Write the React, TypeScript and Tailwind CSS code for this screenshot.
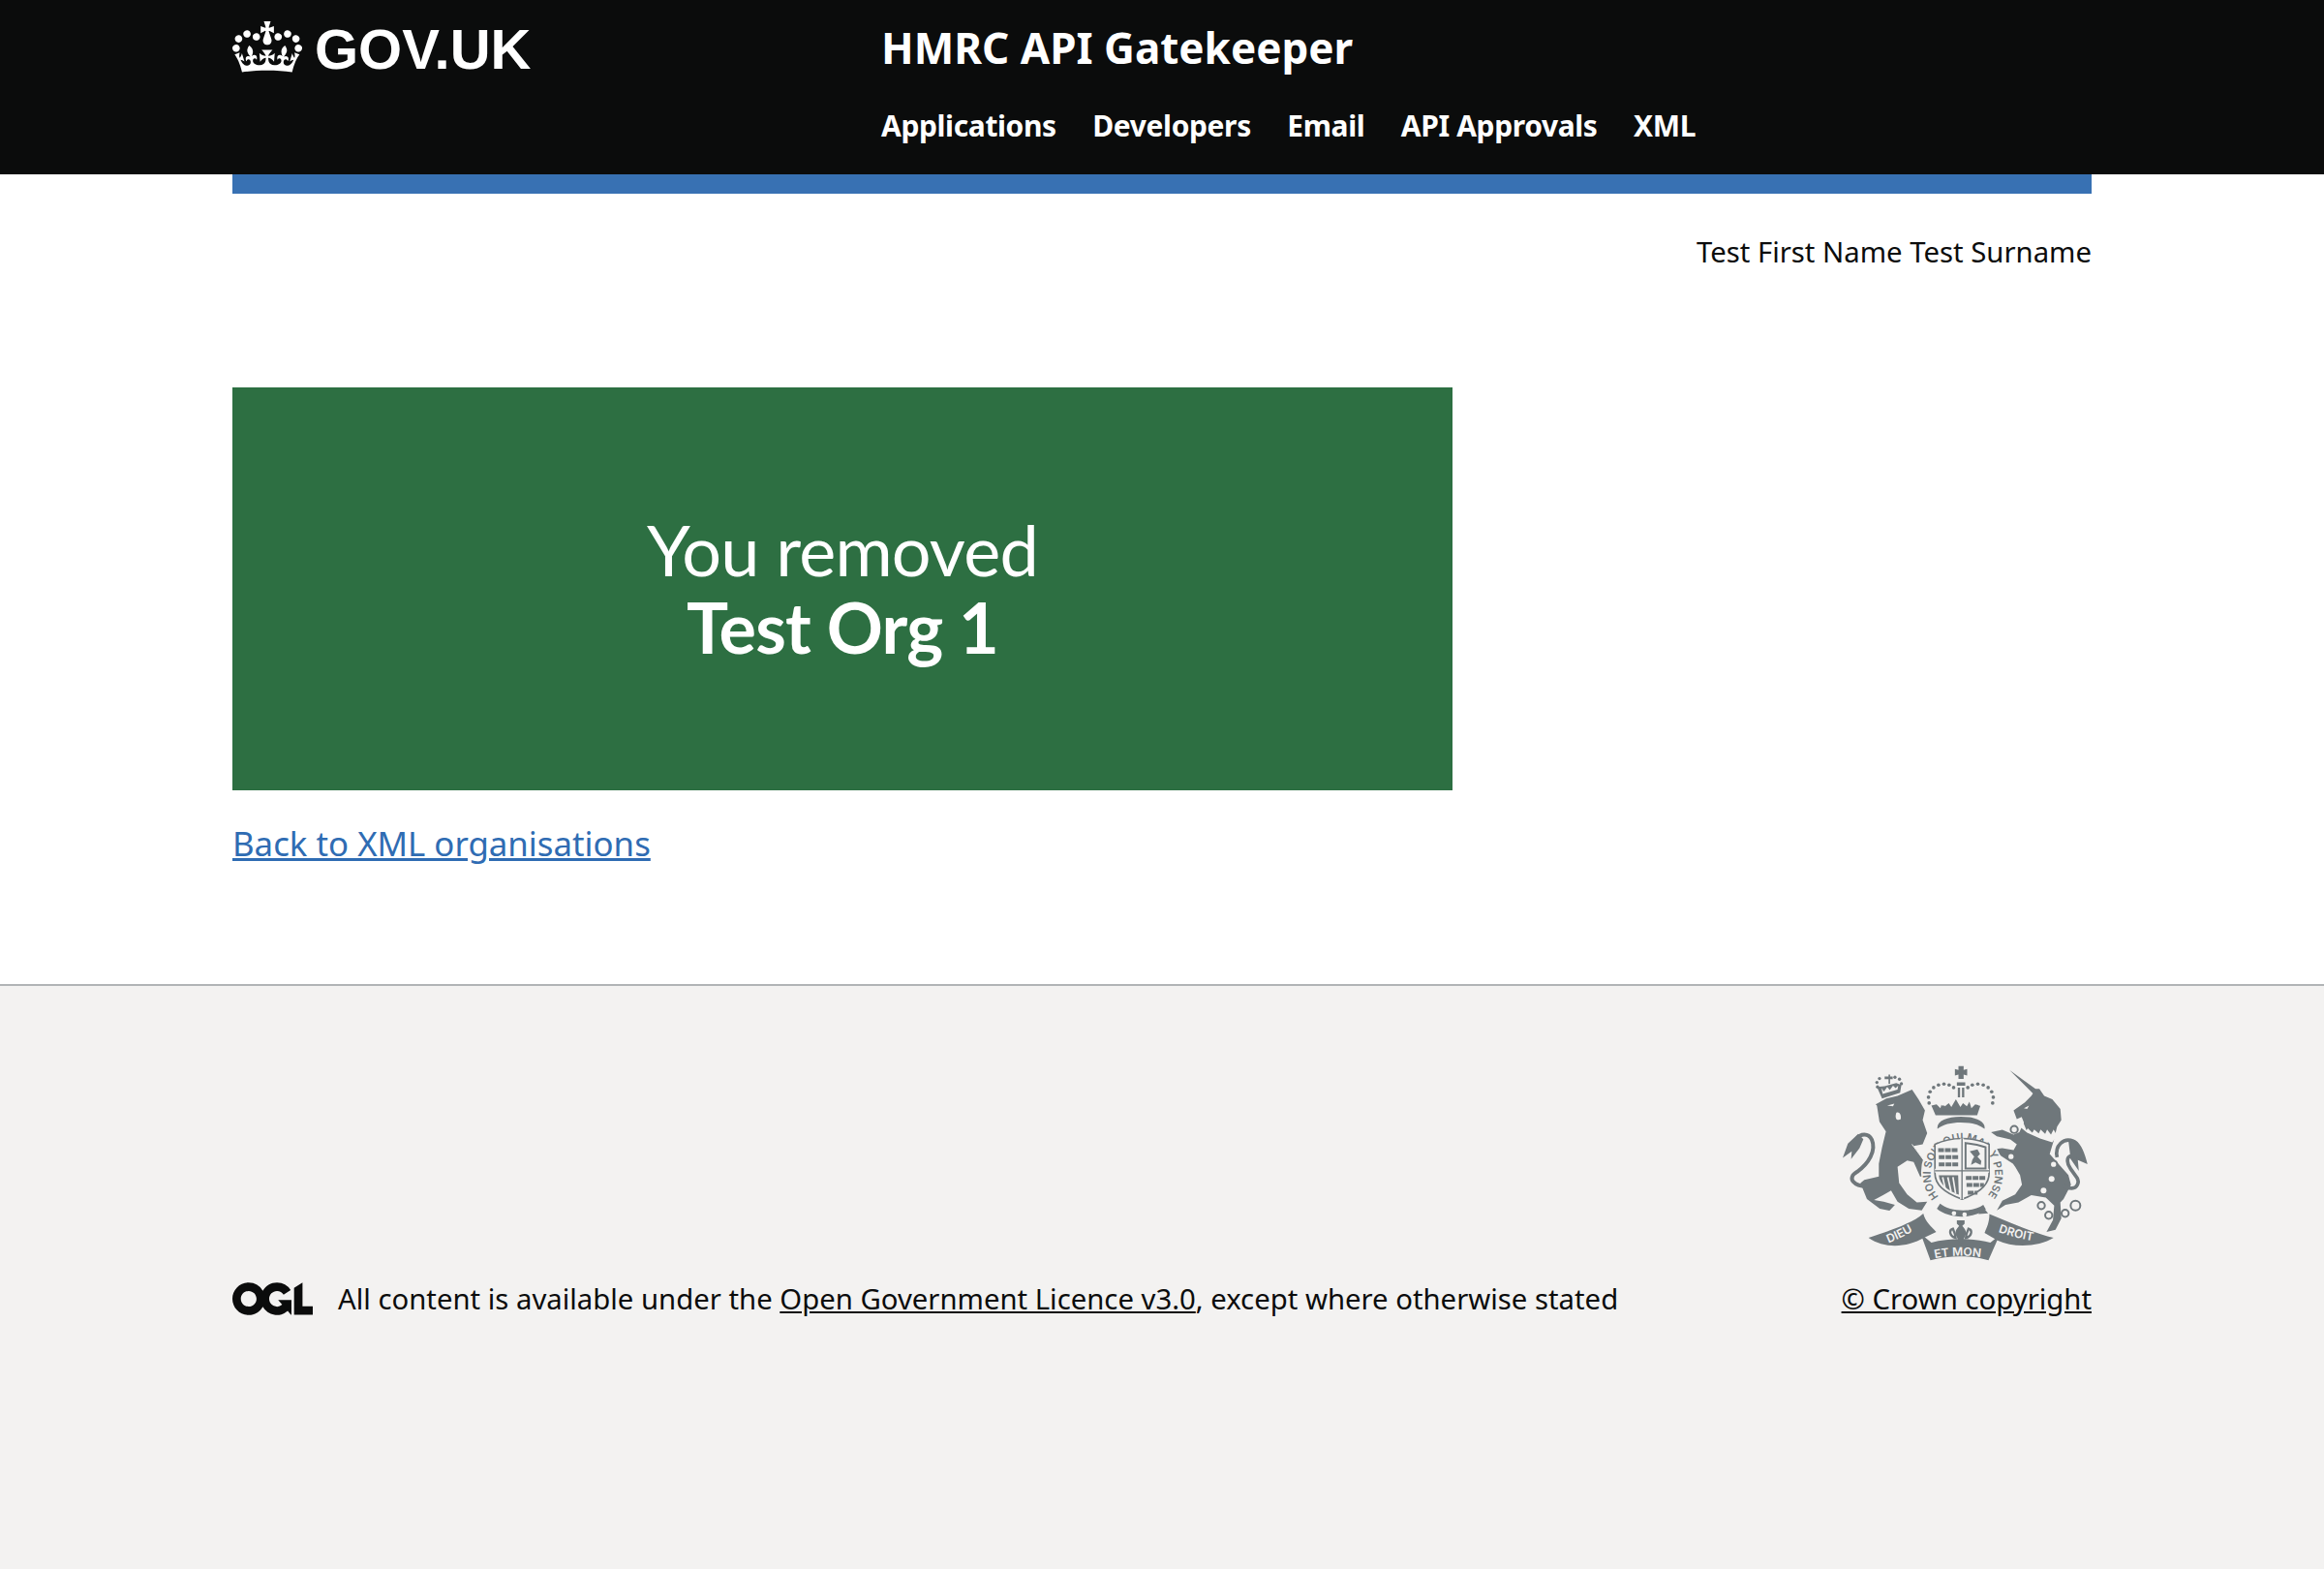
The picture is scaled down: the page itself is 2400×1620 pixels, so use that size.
const font = "font-['Noto_Sans',sans-serif]";

function Crown() {
  return (
    <svg viewBox="0 0 132 97" className="w-[72px] h-[53px] text-white" fill="currentColor">
      <path fillRule="evenodd" d="M25 30.2c3.5 1.5 7.7-.2 9.1-3.7 1.5-3.6-.2-7.8-3.9-9.2-3.6-1.4-7.6.3-9.1 3.9-1.4 3.5.3 7.5 3.9 9zM9 39.5c3.6 1.5 7.8-.2 9.2-3.7 1.5-3.6-.2-7.8-3.9-9.1-3.6-1.5-7.6.2-9.1 3.8-1.4 3.5.3 7.5 3.8 9zM4.4 57.2c3.5 1.5 7.7-.2 9.1-3.8 1.5-3.6-.2-7.7-3.9-9.1-3.5-1.5-7.6.3-9.1 3.8-1.4 3.5.3 7.6 3.9 9.1zm38.3-21.4c3.5 1.5 7.7-.2 9.1-3.8 1.5-3.6-.2-7.7-3.9-9.1-3.6-1.5-7.6.3-9.1 3.8-1.3 3.6.4 7.7 3.9 9.1zm64.4-5.6c-3.6 1.5-7.8-.2-9.1-3.7-1.5-3.6.2-7.8 3.8-9.2 3.6-1.4 7.7.3 9.2 3.9 1.3 3.5-.4 7.5-3.9 9zm15.9 9.3c-3.6 1.5-7.7-.2-9.1-3.7-1.5-3.6.2-7.8 3.7-9.1 3.6-1.5 7.7.2 9.2 3.8 1.5 3.5-.3 7.5-3.8 9zm4.7 17.7c-3.6 1.5-7.8-.2-9.2-3.8-1.5-3.6.2-7.7 3.9-9.1 3.6-1.5 7.7.3 9.2 3.8 1.3 3.5-.4 7.6-3.9 9.1zM89.3 35.8c-3.6 1.5-7.8-.2-9.2-3.8-1.4-3.6.2-7.7 3.9-9.1 3.6-1.5 7.7.3 9.2 3.8 1.4 3.6-.3 7.7-3.9 9.1zM69.7 17.7l8.9 4.7V9.3l-8.9 2.8c-.2-.3-.5-.6-.9-.9L72.4 0H59.6l3.6 11.2c-.3.3-.6.5-.9.9l-8.8-2.8v13.1l8.8-4.7c.3.3.6.7.9.9l-5 15.4v.1c-.2.8-.4 1.6-.4 2.4 0 4.1 3.1 7.5 7 8.1h.2c.3 0 .7.1 1 .1.4 0 .7 0 1-.1h.2c4-.6 7.1-4.1 7.1-8.1 0-.8-.1-1.7-.4-2.4V34l-5.1-15.4c.4-.2.7-.6 1-.9zM66 92.8c16.9 0 32.8 1.1 47.1 3.2 4-16.9 8.9-26.7 14-33.5l-9.6-3.4c1 4.9 1.1 7.2 0 10.2-1.5-1.4-3-4.3-4.2-8.7L108.6 76c2.8-2 5-3.2 7.5-3.3-4.4 9.4-10 11.9-13.6 11.2-4.3-.8-6.3-4.6-5.6-7.9 1-4.7 5.7-5.9 8-.5 4.3-8.7-3-11.4-7.6-8.8 7.1-7.2 7.9-13.5 2.1-21.1-8 6.1-8.1 12.3-4.5 20.8-4.7-5.4-12.1-2.5-9.5 6.2 3.4-5.2 7.9-2 7.2 3.1-.6 4.3-6.4 7.8-13.5 7.2-10.3-.9-10.9-8-11.2-13.8 2.5-.5 7.1 1.8 11 7.3L80.2 60c-4.1 4.4-8 5.3-12.3 5.4 1.4-4.4 8-11.6 8-11.6H55.5s6.4 7.2 7.9 11.6c-4.2-.1-8-1-12.3-5.4l1.4 16.4c3.9-5.5 8.5-7.7 10.9-7.3-.3 5.8-.9 12.8-11.1 13.8-7.2.6-12.9-2.9-13.5-7.2-.7-5 3.8-8.3 7.1-3.1 2.7-8.7-4.6-11.6-9.4-6.2 3.7-8.5 3.6-14.7-4.6-20.8-5.8 7.6-5 13.9 2.2 21.1-4.7-2.6-11.9.1-7.7 8.8 2.3-5.5 7.1-4.2 8.1.5.7 3.3-1.3 7.1-5.7 7.9-3.5.7-9-1.8-13.5-11.2 2.5.1 4.7 1.3 7.5 3.3l-4.7-15.4c-1.2 4.4-2.7 7.2-4.3 8.7-1.1-3-.9-5.3 0-10.2l-9.5 3.4c5 6.9 9.9 16.7 14 33.5 14.8-2.1 30.8-3.2 47.7-3.2z" />
    </svg>
  );
}

function Ogl() {
  return (
    <svg viewBox="0 0 483.2 195.7" className="w-[83px] h-[34px] shrink-0 text-[#0b0c0c]" fill="currentColor">
      <path d="M421.5 142.8V.1l-50.7 32.3v161.1h112.4v-50.7zm-122.3-9.6A47.12 47.12 0 0 1 221 97.8c0-26 21.1-47.1 47.1-47.1 16.7 0 31.4 8.7 39.7 21.8l42.7-27.2A97.63 97.63 0 0 0 268.1 0c-36.5 0-68.3 20.1-85.1 49.7A98 98 0 0 0 97.8 0C43.9 0 0 43.9 0 97.8s43.9 97.8 97.8 97.8c36.5 0 68.3-20.1 85.1-49.7a97.76 97.76 0 0 0 149.6 25.4l19.4 22.2h3v-87.8h-80l24.3 27.5zM97.8 145c-26 0-47.1-21.1-47.1-47.1s21.1-47.1 47.1-47.1 47.2 21 47.2 47S123.8 145 97.8 145" />
    </svg>
  );
}

const BG = "#f3f2f1";
const INK = "#6f777b";

function Crest() {
  const crownDots = [[338,172],[336,154],[341,137],[352,124],[367,116],[384,113],[400,116],[414,124],[458,124],[472,116],[489,113],[506,116],[521,124],[532,137],[537,154],[535,172]];
  const lionDots = [[178,122],[176,108],[184,96],[232,92],[246,98],[252,112]];
  return (
    <svg viewBox="70 50 760 620" className="w-[253px] h-[207px]" fill={INK}>
      {/* royal crown */}
      <path d="M429 57h16v12l11-3v21l-11-3v13h-16V84l-11 3V66l11 3z" />
      <path d="M424 108h26v10h-26zM427 124h7v30h-7zM440 124h7v30h-7z" />
      {crownDots.map(([x, y], i) => <circle key={i} cx={x} cy={y} r="5.5" />)}
      <path d="M345 180l16-4 12 12 6-20 8 14 12-10 8 12 14-24 14 24 8-12 12 10 8-14 6 20 12-12 16 4-10 30H358z" />
      <path d="M372 172l12-14 10 14-6 8h-10zM486 172l12-14 10 14-6 8h-10z" fill={BG} />
      <path d="M364 252c-4-24 28-38 72-38s78 14 74 38c-18-14-44-20-74-20s-56 6-72 20z" />

      {/* lion crown */}
      {lionDots.map(([x, y], i) => <circle key={i} cx={x} cy={y} r="5" />)}
      <path d="M200 90h12v-6h5v6h8v8h-8v14h-5V98h-12z" />
      <path d="M176 122l24-2 36-10 16 6-4 24-56 18z" />
      <path d="M190 126l8 10 10-14 8 10 10-14 8 8 8-8-2 12-46 14z" fill={BG} />

      {/* lion */}
      <path d="M172 176l33-18 35-8 45-20 20 30 20 35-7 30 14 40-14 35-28 5 45 65 5 30-30 0-20-45-20-5-30 20 5 50 25 35 30 25 32-2-17 27-40-5-35-22-20-35-25 15-28 15 30 5 35 10-17 18-30-6-40-30-20-50 12-10 45-10 0-40 10-50 12-50-20-30-8-50z" />
      <path d="M208 180l22-6-4 8zM236 202c10-4 16 6 14 20-10 6-20 0-14-20z" fill={BG} />
      <path d="M285 300l50 68 4 30" stroke={BG} strokeWidth="3" fill="none" />
      <path d="M150 430C105 432 80 405 115 385c35-25 60-65 45-100-10-20-35-20-48 0" stroke={INK} strokeWidth="12" fill="none" />
      <path d="M118 268l-32 30-16 44 28-20-2 24 26-34 12-28z" />

      {/* unicorn */}
      <path d="M588 70L668 128L680 128L695 150L720 160L745 190L748 225L735 245L724 290L712 330L730 350L770 395L778 425L755 470L745 480L748 530L730 565L702 572L722 535L726 490L700 465L655 458L615 480L575 488L548 505L565 475L605 455L626 425L620 395L605 370L598 360L560 335L538 315L565 312L600 318L610 300L590 285L548 275L530 262L565 255L600 270L618 262L632 232L625 215L610 222L600 195L635 170L655 150L660 142z" />
      <path d="M628 228l-8 18 22 18 40 18 38 12 24-34-6-2-6 10-8-14-8 16-12-16-6 14-14-14-6 12-14-12-6 10-14-14-4 6z" fill={BG} />
      <path d="M632 188l16-8-6 10z" fill={BG} />
      <path d="M735 340c-8-36 20-62 50-50 20 8 30 40 36 62l-28-12 2 22-18-26c-14 4-12 24 0 40l20 28c8 14 0 32-16 32-10 0-22-4-28-12" stroke={INK} strokeWidth="11" fill="none" />
      <path d="M770 288l28 6 24 58-28-12 2 22-20-26z" />
      <circle cx="718" cy="407" r="9" fill={BG} />
      <circle cx="693" cy="443" r="9" fill={BG} />
      {[[602,254,11],[592,338,11],[724,362,11],[686,490,11],[709,520,11],[760,514,11],[792,490,15]].map(([x, y, r], i) => (
        <circle key={i} cx={x} cy={y} r={r} fill={BG} stroke={INK} strokeWidth="6" />
      ))}

      {/* garter */}
      <ellipse cx="441" cy="388" rx="128" ry="138" fill={BG} />
      <path d="M372 484c30 26 104 28 134 4l8 14c-40 30-114 30-152-2z" />
      <circle cx="415" cy="514" r="7" fill={BG} /><circle cx="448" cy="518" r="7" fill={BG} />
      <path d="M503 492l18 22-30 2z" />
      <defs>
        <path id="garterArc" d="M368 462A100 104 0 1 1 520 458" />
      </defs>
      <text fontFamily="Inter, sans-serif" fontSize="33" fontWeight="600" fill={INK}><textPath href="#garterArc">HONI SOIT QUI MAL Y PENSE</textPath></text>

      {/* shield */}
      <path d="M356 300c26-12 54-18 84-18s58 6 84 18v90c0 40-44 66-84 80-40-14-84-40-84-80z" fill={BG} stroke={INK} strokeWidth="5" />
      <path d="M440 282v188M356 382h168" stroke={BG} strokeWidth="12" />
      <path d="M440 282v188M356 382h168" stroke={INK} strokeWidth="4" />
      <path d="M366 318h62M368 340h60M368 362h60" stroke={INK} strokeWidth="12" strokeDasharray="18 3" />
      <path d="M451 296c22 2 42 6 62 13v66h-62z" fill="none" stroke={INK} strokeWidth="6" />
      <path d="M464 322l24-6 8 14-8 8 12 14-2 12-16-8-14 8 4-16 6-10z" />
      <path d="M368 396h60l2 60c-30-10-60-30-62-60z" />
      <path d="M380 402l8 36M396 402l10 44M412 402l8 50" stroke={BG} strokeWidth="5" />
      <path d="M452 404h62M454 426h54M458 450h30" stroke={INK} strokeWidth="12" strokeDasharray="18 3" />

      {/* ribbon */}
      <path d="M150 590C200 572 280 550 320 515C326 540 345 555 360 572L322 590C270 620 200 625 150 590z" />
      <path d="M312 578L345 605C400 590 475 590 528 605L556 582L522 660C470 644 400 644 342 660z" />
      <path d="M724 590C660 575 585 540 525 516C525 545 515 560 510 575L550 598C600 622 680 618 724 590z" />
      <defs>
        <path id="ribL" d="M212 606Q266 585 316 552" />
        <path id="ribM" d="M352 655Q436 636 526 655" />
        <path id="ribR" d="M552 572Q610 592 676 602" />
      </defs>
      <text fontFamily="Inter, sans-serif" fontSize="36" fontWeight="600" fill={BG}><textPath href="#ribL">DIEU</textPath></text>
      <text fontFamily="Inter, sans-serif" fontSize="36" fontWeight="600" fill={BG}><textPath href="#ribM" startOffset="4">ET MON</textPath></text>
      <text fontFamily="Inter, sans-serif" fontSize="36" fontWeight="600" fill={BG}><textPath href="#ribR">DROIT</textPath></text>

      {/* fleur-de-lis */}
      <path d="M424 536h24v10l-8 8h-8l-8-8z" />
      <path d="M436 548c14 14 20 24 14 36l-14 30-14-30c-6-12 0-22 14-36z" />
      <path d="M412 562c-14 4-10 24 8 28l-2-12zM460 562c14 4 10 24-8 28l2-12z" fill="none" stroke={INK} strokeWidth="7" />
    </svg>
  );
}

export default function App() {
  return (
    <div className={`${font} min-h-[1620px] flex flex-col bg-white text-[#0b0c0c] text-[29.3px]`}>
      <header className="bg-[#0b0c0c] h-[180px] text-white">
        <div className="w-[1920px] mx-auto flex">
          <div className="w-[670px] pt-[22px] flex items-start gap-[13px]">
            <Crown />
            <span className="font-['Liberation_Sans',sans-serif] font-bold text-[58px] leading-[58px]">GOV.UK</span>
          </div>
          <div>
            <div className="pt-[24px] font-bold text-[44px] leading-[50px]">HMRC API Gatekeeper</div>
            <nav className="mt-[37px] flex gap-[37.5px] font-bold text-[30px] leading-[38px] tracking-[-0.38px]">
              <span>Applications</span>
              <span>Developers</span>
              <span>Email</span>
              <span>API Approvals</span>
              <span>XML</span>
            </nav>
          </div>
        </div>
      </header>
      <main className="w-[1920px] mx-auto flex-none">
        <div className="h-[20px] bg-[#3871b3]" />
        <div className="pt-[39px] text-right leading-[42px]">Test First Name Test Surname</div>
        <section className="mt-[119px] w-[1260px] h-[416px] pb-[3px] bg-[#2d6f42] text-white text-center flex flex-col justify-center font-['Lato',sans-serif] text-[72px] leading-[80px] tracking-[-0.8px]">
          <div>You removed</div>
          <div className="font-bold">Test Org 1</div>
        </section>
        <div className="mt-[30px] mb-[120px]">
          <a className="text-[#2f6cb3] underline leading-[50px] text-[34.8px]">Back to XML organisations</a>
        </div>
      </main>
      <footer className="grow bg-[#f3f2f1] border-t-2 border-[#b1b4b6]">
        <div className="w-[1920px] mx-auto flex items-end justify-between pt-[80px]">
          <div className="flex items-center gap-[26px] leading-[40px]">
            <Ogl />
            <span>All content is available under the <a className="underline">Open Government Licence v3.0</a>, except where otherwise stated</span>
          </div>
          <div className="flex flex-col items-end">
            <div className="mr-[4px] mb-[16px]"><Crest /></div>
            <a className="underline leading-[40px]">© Crown copyright</a>
          </div>
        </div>
      </footer>
    </div>
  );
}
